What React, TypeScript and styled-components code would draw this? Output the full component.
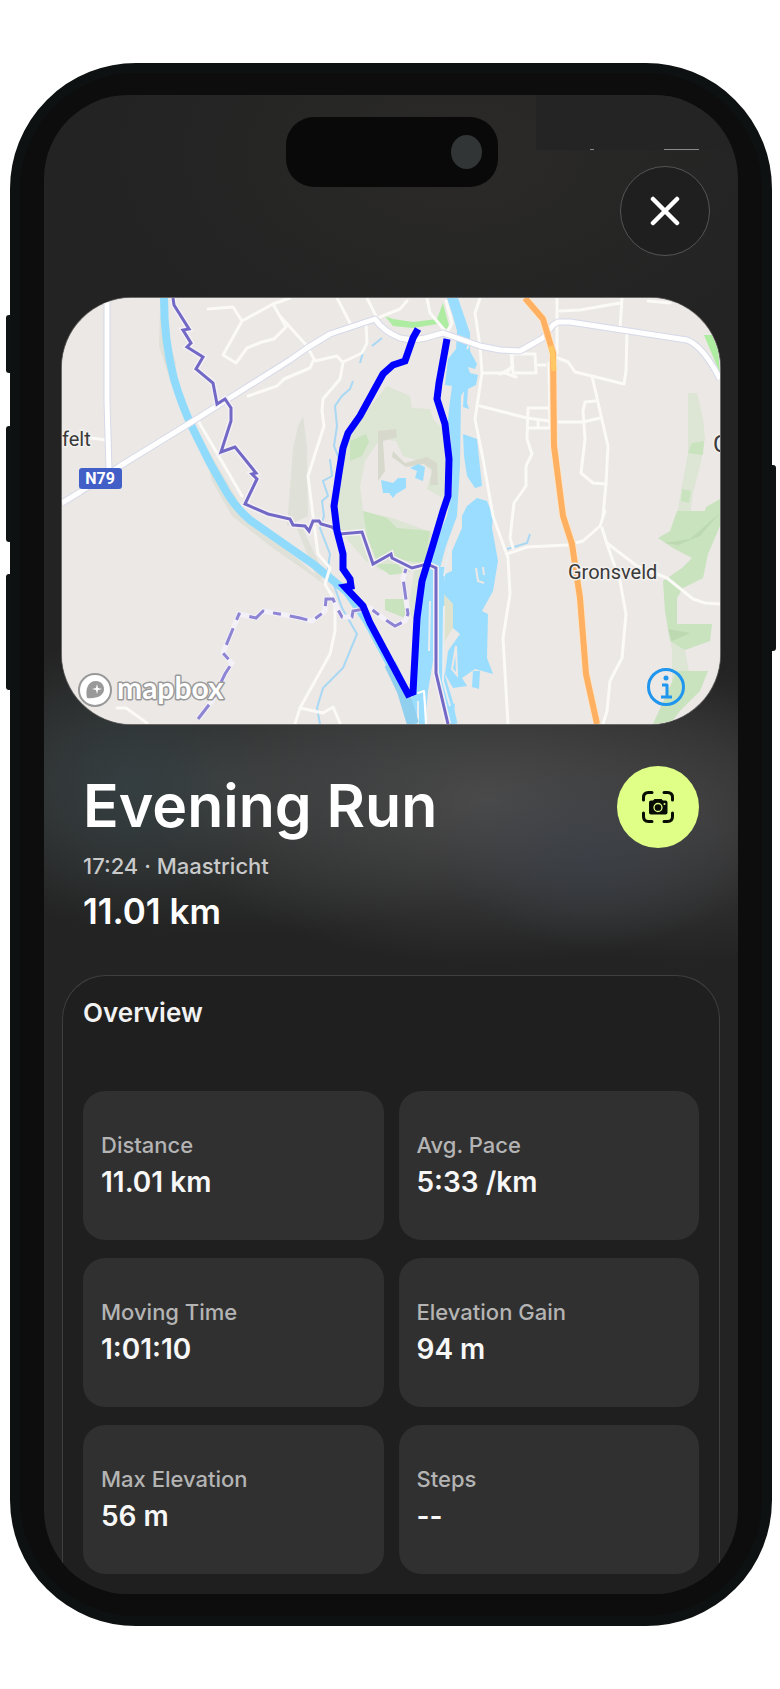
import React from "react";
import styled, { createGlobalStyle } from "styled-components";

const GlobalStyle = createGlobalStyle`
  * { box-sizing: border-box; }
  body { margin: 0; background: #fff; font-family: Inter, "Liberation Sans", sans-serif; }
  h1, h2, p, dl, dt, dd { margin: 0; }
  button { padding: 0; border: 0; font: inherit; cursor: pointer; }
`;

const Page = styled.main`
  max-width: 780px;
  margin: 0 auto;
  padding: 63px 8px 63px 10px;
`;

const Phone = styled.div`
  position: relative;
  padding: 22px 24px 22px 24px;
  border: 10px solid #0d1112;
  border-radius: 126px;
  background: #0d0d0d;
`;

const SideKey = styled.span<{ $side: "left" | "right"; $top: number; $length: number }>`
  position: absolute;
  ${({ $side }) => $side}: -14px;
  top: ${({ $top }) => $top}px;
  width: 5px;
  height: ${({ $length }) => $length}px;
  border-radius: ${({ $side }) => ($side === "left" ? "3px 0 0 3px" : "0 3px 3px 0")};
  background: #101313;
`;

const Screen = styled.div`
  position: relative;
  overflow: hidden;
  padding: 71px 18px 0;
  border-radius: 84px;
  background:
    radial-gradient(ellipse 20% 9% at 12% 46%, #34424699, #34424600),
    radial-gradient(ellipse 22% 6% at 79% 51%, #38425066, #38425000),
    radial-gradient(ellipse 48% 11% at 64% 47%, #4a4a4b, #4a4a4b00),
    radial-gradient(ellipse 36% 10% at 92% 48%, #3d3c3c, #3d3c3c00),
    radial-gradient(ellipse 60% 10% at 26% 46%, #3a3d3d, #3a3d3d00),
    radial-gradient(ellipse 50% 14% at 60% 4%, #2b2a29, #2b2a2900),
    #232323;
`;

const Island = styled.div`
  position: absolute;
  top: 22px;
  left: 50%;
  display: flex;
  align-items: center;
  justify-content: flex-end;
  width: 212px;
  height: 70px;
  margin-left: -105px;
  padding-right: 16px;
  border-radius: 28px;
  background: #090909;
`;

const Lens = styled.span`
  width: 31px;
  height: 34px;
  border-radius: 50%;
  background: #313536;
`;

const StatusPatch = styled.div`
  position: absolute;
  top: 0;
  right: 0;
  display: flex;
  align-items: flex-end;
  justify-content: flex-end;
  gap: 70px;
  width: 202px;
  height: 55px;
  padding-right: 39px;
  background: #242424;
`;

const StatusMark = styled.span<{ $width: number }>`
  width: ${({ $width }) => $width}px;
  height: 1px;
  background: #8a8a8a;
`;

const TopBar = styled.header`
  display: flex;
  justify-content: flex-end;
  padding: 0 10px 42px;
`;

const CloseButton = styled.button`
  position: relative;
  display: grid;
  place-items: center;
  width: 90px;
  height: 90px;
  border: 1px solid #555;
  border-radius: 50%;
  background: #1f1f1f;
`;

const MapCard = styled.section`
  position: relative;
  overflow: hidden;
  border-radius: 70px;
  box-shadow: 0 0 0 1px #6b6968;
  background: #ebe8e5;
`;

const MapDrawing = styled.svg`
  display: block;
  width: 100%;
  height: auto;
`;

const MapCredit = styled.a`
  position: absolute;
  left: 14px;
  bottom: 10px;
  display: block;
  height: 48px;
`;

const InfoButton = styled.button`
  position: absolute;
  right: 34px;
  bottom: 17px;
  width: 39px;
  height: 39px;
  border-radius: 50%;
  background: none;
`;

const Summary = styled.section`
  display: flex;
  align-items: flex-start;
  justify-content: space-between;
  padding: 42px 21px 43px;
`;

const Heading = styled.div`
  display: flex;
  flex-direction: column;
  gap: 10px;
  padding-top: 4px;
  color: #fff;
`;

const Title = styled.h1`
  font-size: 59px;
  line-height: 72px;
  font-weight: 600;
`;

const Meta = styled.p`
  color: #c9caca;
  font-size: 22px;
  line-height: 28px;
  font-weight: 500;
`;

const Total = styled.p`
  font-size: 35px;
  line-height: 42px;
  font-weight: 600;
`;

const SnapshotButton = styled.button`
  display: grid;
  place-items: center;
  width: 82px;
  height: 82px;
  border-radius: 50%;
  background: #dfff87;
`;

const OverviewCard = styled.section`
  display: flex;
  flex-direction: column;
  gap: 62px;
  padding: 21px 20px 20px;
  border: 1px solid #3f3f3f;
  border-bottom: 0;
  border-radius: 44px 44px 0 0;
  background: #1f1f1f;
`;

const OverviewTitle = styled.h2`
  color: #f2f2f2;
  font-size: 26px;
  line-height: 32px;
  font-weight: 600;
`;

const StatGrid = styled.dl`
  display: grid;
  grid-template-columns: 1fr 1fr;
  gap: 18px 15px;
`;

const Stat = styled.div`
  display: flex;
  flex-direction: column;
  gap: 5px;
  padding: 40px 18px;
  border-radius: 22px;
  background: #303030;
`;

const StatLabel = styled.dt`
  color: #b4b4b4;
  font-size: 22px;
  line-height: 28px;
  font-weight: 500;
`;

const StatValue = styled.dd`
  color: #f7f7f7;
  font-size: 28px;
  line-height: 36px;
  font-weight: 600;
`;

const stats = [
  ["Distance", "11.01 km"],
  ["Avg. Pace", "5:33 /km"],
  ["Moving Time", "1:01:10"],
  ["Elevation Gain", "94 m"],
  ["Max Elevation", "56 m"],
  ["Steps", "--"],
];

const minorRoads = [
  "M208 308L233 306L242 320L273 303L290 297M242 320L223 354L236 362L247 347L262 341L274 338L286 326L273 303",
  "M248 395L277 385L284 378L310 367L313 360",
  "M91 437L107 439M197 418L242 495",
  "M337 297L350 322M367 297L377 317M407 300L400 308L380 316",
  "M280 315L307 345L315 360L337 355L343 362L340 378L323 398L322 410L324 425L308 475L313 515L318 553L330 567L325 583L335 600L335 630L330 653L300 707L295 723",
  "M366 322L367 342L362 352L343 361",
  "M427 297L430 312L447 332M446 300L452 322L446 334",
  "M480 297L475 312L480 345L482 372L475 418L483 458L493 515L508 557L510 593L503 637L508 723",
  "M482 372L507 372L512 365L511 352M480 405L527 417L557 421L583 421L600 417",
  "M557 297L557 352M560 310L580 309L620 302M622 297L620 328M627 330L626 370L624 383L592 375L575 371L568 361L558 357",
  "M592 375L608 445L606 483L603 515",
  "M595 400L585 401L583 410L585 438L581 472L593 482L606 483",
  "M512 353L535 353L536 372L513 372ZM500 373L513 366M536 364L545 364",
  "M549 362L550 427L528 427M550 407L528 407L527 438L532 453L526 465L526 485L514 502L510 537L513 547M538 427L538 420",
  "M507 553L527 546L567 544L583 540L600 525L605 510L603 515",
  "M602 527L607 543L620 580L626 613L622 657L610 680L607 710L603 723",
  "M607 542L637 565L667 577L693 598L705 602L720 603",
  "M300 707L323 712L333 706L340 722M117 707L126 707L147 722M516 376L505 372",
  "M648 300L670 302",
];

const northRoad =
  "M62 502L80 491L120 465L190 422L290 359L307 347L330 333L375 318Q383 330 400 337Q413 340 425 337L443 332L480 345L500 349L520 350L543 337L553 324L558 321L570 321L687 339Q703 345 720 378";
const westRoad = "M107 297L107 400L109 470";
const motorway = "M525 297L543 318L553 352L554 445L563 515L572 543L580 597L586 673L597 723";
const canal =
  "M164 297Q164 340 174 378Q182 405 193 428L210 462L227 492Q236 507 250 519L290 547L313 563L347 591L367 620L390 663L403 690L413 723";
const border =
  "M173 297L174 304L189 328L183 329L191 342L187 346L203 356L196 368L213 382L217 403L225 398L231 407L231 420L221 451L235 446L256 472L252 473L257 478L245 503L268 513L290 518L293 524L305 525L309 530L313 520L319 520L321 523L332 526L340 533L362 531L373 563L391 553L392 557L412 567L427 563L436 567L436 672L448 723";
const dashedBorder =
  "M198 718L212 700L225 673L232 662L223 652L239 613L256 617L263 610L290 615L300 617L312 620L325 610L326 598L333 598L337 607L342 616L352 616L353 610L370 607L383 617L395 625L405 620L408 613L403 577L406 568";
const route =
  "M418 328L413 337L405 360L393 364L383 373L360 415L348 432L343 447L339 472L334 505L337 530L343 553L343 568L350 578L351 585L345 586L363 605L370 622L408 693L413 691L417 617L422 580L432 547L443 510L448 495L449 458L445 423L437 398L439 382L447 338";

function RouteMap() {
  return (
    <MapDrawing viewBox="62 297 658 426" role="img" aria-label="Map of the run south of Maastricht" fill="none">
      <rect x="62" y="297" width="658" height="426" fill="#ebe8e5" />

      <g fill="#dfe1d8">
        <path d="M303 415L307 445L308 515L287 525L293 448L298 425Z" />
        <path d="M200 435L212 480L232 515L270 545L320 580L340 596L300 560L250 520Z" />
        <path d="M160 310L159 345L172 385L176 362Z" />
        <path d="M294 520L303 528L325 575L318 580Z" />
      </g>
      <g fill="#dde5d4">
        <path d="M387 385L410 395L412 407L430 408L433 418L443 428L447 498L436 510L440 540L425 575L415 620L408 610L414 570L390 575L366 560L340 530L334 515L340 452L360 418Z" />
        <path d="M688 392L697 392L703 418L705 438L700 465L693 492L690 515L677 515L682 485L688 452Z" />
        <path d="M443 592L453 603L453 627L445 640L442 655Z" fill="#dfe3ce" />
        <path d="M663 580L672 650L672 680L690 676L685 649Z" />
      </g>
      <path d="M380 438L396 440L403 455L420 460L432 470L427 488L445 498L438 535L428 530L392 517L363 510L360 485L365 460Z" fill="#ebe8e5" />
      <path d="M393 450L405 462L427 456L437 462L438 484L430 484L432 468L424 463L406 466L392 456ZM378 430L396 428L397 436L383 440L385 470L378 480Z" fill="#d8d9cd" />
      <path d="M348 570L372 566L400 575L404 597L380 600L385 614L372 614L356 590Z" fill="#ebe8e5" />
      <g fill="#c8e3be">
        <path d="M363 510L387 517L397 527L430 530L425 563L393 557L377 560L367 535Z" />
        <path d="M350 440L366 433L369 441L362 455L350 460ZM385 598L405 598L405 617L385 609ZM375 563L398 563L403 572L390 574Z" />
        <path d="M677 510L720 510L720 525L708 553L703 577L683 587L677 597L677 623L712 623L710 640L685 649L670 640L665 610L663 580L682 567L692 557L673 547L658 537L670 530Z" />
        <path d="M677 670L708 670L700 690L680 710L670 723L653 723L668 690Z" />
        <path d="M692 442L704 440L703 454L688 452ZM682 488L691 490L689 502L681 500ZM706 506L720 498L720 512L704 512Z" />
      </g>
      <path d="M665 542L690 538L720 512L700 535L678 544ZM668 628L690 632L672 640Z" fill="#bcd9b1" />
      <path d="M385 315L393 318L413 321L437 318L443 302L449 325L446 328L437 323L413 327L393 325ZM704 334L712 334L718 348L720 372Z" fill="#aeeca2" />

      <g fill="#9bddff">
        <path d="M447 297L458 297L470 332L470 350L477 363L475 368L468 366L470 372L478 374L476 384L468 388L467 402L469 408L463 406L464 390L461 395L460 465L457 515L446 545L440 567L438 600L433 660L428 690L425 723L408 723L413 690L417 640L421 590L432 550L447 515L452 490L451 440L448 420L449 408L452 385L445 384L448 358L456 348L457 330L453 315Z" />
        <path d="M463 433L477 438L482 485L475 487L467 475L464 455Z" />
        <path d="M462 515L467 505L477 497L487 500L493 515L492 527L498 560L493 590L482 610L488 613L487 657L493 673L475 668L462 677L467 685L453 687L445 673L448 650L460 633L453 627L453 603L443 592L445 573L452 570L452 550L462 527Z" />
        <path d="M473 670L480 670L479 688L472 686ZM447 700L455 703L453 718L447 712Z" />
        <path d="M381 479L393 482L398 477L406 477L406 487L396 493L393 497L389 492L383 492ZM418 463L425 466L423 480L415 477L417 470L410 467Z" />
      </g>
      <path d="M441 566L440 670L449 700L454 723" stroke="#9bddff" strokeWidth="7" />
      <path d="M450 545L444 575M430 600L429 650M444 605L443 680L450 705M418 700L418 723M424 690L427 723M467 348L471 340" stroke="#e9edf0" strokeWidth="2" />
      <path d="M476 567L478 580L484 582M483 566L484 574M456 645L452 668L457 674Z" stroke="#ebe8e5" strokeWidth="2" />
      <path d="M353 380L350 388L342 395L335 405L337 425L334 445L340 460M330 458L332 475L323 480L328 495L322 500L324 515L320 527L330 553L328 567L342 607L357 633L343 667L323 687L317 707L320 723M360 362L364 348M372 345L382 337M507 548L527 542L530 533" stroke="#a8d8f4" strokeWidth="2" />
      <path d={canal} stroke="#90dbfb" strokeWidth="8" />
      <path d="M390 663L403 690L413 723" stroke="#90cfee" strokeWidth="12" />

      <g strokeLinejoin="round" strokeLinecap="round">
        {minorRoads.map((d) => (
          <path key={d} d={d} stroke="#fbfaf7" strokeWidth="3" />
        ))}
        <path d="M418 692L424 690L426 723" stroke="#fff" strokeWidth="2" />
      </g>
      <g strokeLinejoin="round">
        <path d={northRoad} stroke="#d6d9e8" strokeWidth="7" />
        <path d={westRoad} stroke="#d6d9e8" strokeWidth="7" />
        <path d={northRoad} stroke="#fff" strokeWidth="5" />
        <path d={westRoad} stroke="#fff" strokeWidth="5" />
        <path d={motorway} stroke="#fbe6cd" strokeWidth="8" />
        <path d={motorway} stroke="#ffb061" strokeWidth="6" />
        <path d="M551 345L553 356L554 370" stroke="#ffc864" strokeWidth="5" />
      </g>
      <path d={border} stroke="#f4f0f4" strokeWidth="6" />
      <path d={border} stroke="#7268c6" strokeWidth="3" />
      <path d={dashedBorder} stroke="#f4f0f8" strokeWidth="5" />
      <path d={dashedBorder} stroke="#8d85d3" strokeWidth="3" strokeDasharray="18 9 8 9" />
      <path d={route} stroke="#0000ff" strokeWidth="7" />

      <rect x="79" y="467" width="43" height="21" rx="3" fill="#425fc8" />
      <g fontFamily="Roboto, sans-serif">
        <text x="100" y="483" fill="#fff" fontSize="16" fontWeight="700" textAnchor="middle">
          N79
        </text>
        <g fill="#3a3a3a" stroke="#f3f1ef" strokeWidth="3" paintOrder="stroke" fontSize="20">
          <text x="62" y="445">felt</text>
          <text x="568" y="578">Gronsveld</text>
          <text x="713" y="451" fontSize="24">C</text>
        </g>
      </g>
    </MapDrawing>
  );
}

function CreditLogo() {
  return (
    <svg width="160" height="48" viewBox="0 0 160 48" role="img" aria-label="mapbox">
      <circle cx="19" cy="24" r="16" fill="#fff" stroke="#999" strokeWidth="2" />
      <path d="M11 32C9 23 12 15 20 15C25 15 28 19 28 23C28 30 20 33 11 32Z" fill="#999" />
      <path d="M21 18L22 22L26 23L22 24L21 28L20 24L16 23L20 22Z" fill="#fff" />
      <text
        x="41"
        y="33"
        fontFamily="Lato, sans-serif"
        fontSize="30"
        fontWeight="700"
        fill="#fff"
        stroke="#999"
        strokeWidth="3"
        strokeLinejoin="round"
        paintOrder="stroke"
      >
        mapbox
      </text>
    </svg>
  );
}

function InfoIcon() {
  return (
    <svg width="39" height="39" viewBox="0 0 39 39" fill="none" stroke="#2196ee" strokeWidth="3" aria-hidden="true">
      <circle cx="19" cy="19" r="17.5" />
      <circle cx="19" cy="10" r="2.5" fill="#2196ee" stroke="none" />
      <path d="M15 17H20V28M14 29H25" strokeLinejoin="round" />
    </svg>
  );
}

function CloseIcon() {
  return (
    <svg width="30" height="30" viewBox="0 0 30 30" stroke="#fff" strokeWidth="4.5" strokeLinecap="round" aria-hidden="true">
      <path d="M3 3L27 27M27 3L3 27" />
    </svg>
  );
}

function SnapshotIcon() {
  return (
    <svg width="32" height="32" viewBox="0 0 32 32" fill="none" aria-hidden="true">
      <path
        d="M1.5 9V6.5Q1.5 1.5 6.5 1.5H10M22 1.5H25.5Q30.5 1.5 30.5 6.5V9M30.5 22V25.5Q30.5 30.5 25.5 30.5H22M10 30.5H6.5Q1.5 30.5 1.5 25.5V22"
        stroke="#080c02"
        strokeWidth="3"
        strokeLinecap="round"
      />
      <path d="M7 11.5Q7 9.5 9 9.5H11L12.5 8H19.5L21 9.5H23.5Q25.5 9.5 25.5 11.5V21.5Q25.5 23.5 23.5 23.5H9Q7 23.5 7 21.5Z" fill="#080c02" />
      <circle cx="16" cy="16.5" r="4" stroke="#dfff87" strokeWidth="1.3" />
      <circle cx="22.5" cy="13" r="1" fill="#dfff87" />
    </svg>
  );
}

export default function App() {
  return (
    <>
      <GlobalStyle />
      <Page>
        <Phone>
          <SideKey $side="left" $top={242} $length={58} />
          <SideKey $side="left" $top={353} $length={116} />
          <SideKey $side="left" $top={501} $length={116} />
          <SideKey $side="right" $top={392} $length={186} />
          <Screen>
            <StatusPatch>
              <StatusMark $width={4} />
              <StatusMark $width={35} />
            </StatusPatch>
            <Island>
              <Lens />
            </Island>
            <TopBar>
              <CloseButton type="button" aria-label="Close">
                <CloseIcon />
              </CloseButton>
            </TopBar>
            <MapCard>
              <RouteMap />
              <MapCredit href="#mapbox">
                <CreditLogo />
              </MapCredit>
              <InfoButton type="button" aria-label="Map information">
                <InfoIcon />
              </InfoButton>
            </MapCard>
            <Summary>
              <Heading>
                <Title>Evening Run</Title>
                <Meta>17:24 · Maastricht</Meta>
                <Total>11.01 km</Total>
              </Heading>
              <SnapshotButton type="button" aria-label="Capture snapshot">
                <SnapshotIcon />
              </SnapshotButton>
            </Summary>
            <OverviewCard>
              <OverviewTitle>Overview</OverviewTitle>
              <StatGrid>
                {stats.map(([label, value]) => (
                  <Stat key={label}>
                    <StatLabel>{label}</StatLabel>
                    <StatValue>{value}</StatValue>
                  </Stat>
                ))}
              </StatGrid>
            </OverviewCard>
          </Screen>
        </Phone>
      </Page>
    </>
  );
}
